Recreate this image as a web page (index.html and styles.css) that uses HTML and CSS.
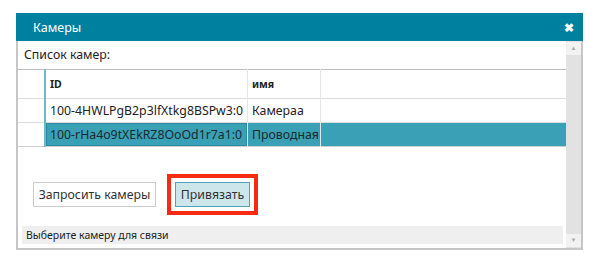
FILE: index.html
```html
<!DOCTYPE html>
<html lang="ru">
<head>
    <meta charset="UTF-8">
    <title>Камеры</title>
    <link rel="stylesheet" href="styles.css">
</head>
<body>

    <div class="dialog">
        <div class="dialog-title">
            <span>Камеры</span>
            <span class="close">&#10006;</span>
        </div>
        <div class="dialog-body">
            <div class="content">
                <div class="caption">Список камер:</div>
                <table class="grid">
                    <tr class="head">
                        <td class="rh"></td>
                        <td class="c-id">ID</td>
                        <td class="c-name">имя</td>
                        <td></td>
                    </tr>
                    <tr>
                        <td class="rh"></td>
                        <td class="c-id">100-4HWLPgB2p3lfXtkg8BSPw3:0</td>
                        <td class="c-name">Камераа</td>
                        <td></td>
                    </tr>
                    <tr class="selected">
                        <td class="rh"></td>
                        <td class="c-id focus">100-rHa4o9tXEkRZ8OoOd1r7a1:0</td>
                        <td class="c-name">Проводная</td>
                        <td></td>
                    </tr>
                </table>
                <div class="actions">
                    <button class="btn btn-query">Запросить камеры</button>
                    <button class="btn btn-primary">Привязать</button>
                </div>
                <div class="status">Выберите камеру для связи</div>
            </div>
            <div class="scrollbar">
                <div class="arrow">&#9650;</div>
                <div class="track"></div>
                <div class="arrow">&#9660;</div>
            </div>
        </div>
    </div>

</body>
</html>
```
FILE: styles.css
```css
body {
    margin: 0;
    background-color: #ffffff;
    font-family: "Noto Sans", "Open Sans", sans-serif;
    color: #222;
}
.dialog {
    margin: 13px 0 0 16px;
    width: 567px;
}
.dialog-title {
    height: 28px;
    background-color: #00809f;
    color: #fff;
    font-size: 12.5px;
    display: flex;
    align-items: center;
    justify-content: space-between;
    padding: 0 9px 0 17px;
}
.close {
    font-size: 12px;
    font-weight: bold;
}
.dialog-body {
    display: flex;
    height: 207px;
    border: 2px solid #c6c6c6;
    border-top: none;
}
.content {
    flex: 1;
    display: flex;
    flex-direction: column;
}
.caption {
    height: 28px;
    line-height: 28px;
    font-size: 12.3px;
    padding-left: 6px;
}
.grid {
    border-collapse: collapse;
    table-layout: fixed;
    width: 100%;
    font-size: 12.3px;
    border-top: 1px solid #bdbdbd;
    border-bottom: 1px solid #cfcfcf;
}
.grid td {
    border-top: 1px solid #dedede;
    height: 23px;
    padding: 0 0 0 4px;
    white-space: nowrap;
    overflow: hidden;
}
.grid .head td {
    height: 28px;
    font-size: 10.5px;
    font-weight: bold;
    border-top: none;
}
.grid td.rh {
    width: 22px;
    border-right: 2px solid #6db8c9;
    background-color: #fff;
}
.grid td.c-id {
    width: 197px;
    border-right: 1px solid #e6e6e6;
}
.grid td.c-name {
    width: 68px;
    border-right: 1px solid #e6e6e6;
}
.grid .selected td {
    background-color: #39a0b5;
    color: #1b2b30;
}
.grid .selected td.rh {
    background-color: #fff;
}
.grid .selected td.focus {
    box-shadow: inset 0 0 0 1px #2a8ca2;
}
.actions {
    display: flex;
    gap: 19px;
    margin: 35px 0 0 15px;
}
.btn {
    height: 25px;
    padding: 0;
    font-family: inherit;
    font-size: 12.3px;
    color: #333;
    background-color: #fff;
    border: 1px solid #cccccc;
}
.btn-query {
    width: 123px;
}
.btn-primary {
    width: 75px;
    background-color: #cde6ec;
    border-color: #4da4b9;
    outline: 4px solid #f52b12;
    outline-offset: 4px;
}
.status {
    margin: 19px 3px 0 4px;
    height: 18px;
    line-height: 18px;
    padding-left: 4px;
    font-size: 10.5px;
    background-color: #efefef;
}
.scrollbar {
    width: 15px;
    display: flex;
    flex-direction: column;
    background-color: #e2e2e2;
}
.arrow {
    height: 13px;
    margin: 1px 0;
    background-color: #f2f2f2;
    color: #a8a8a8;
    font-size: 6px;
    text-align: center;
    line-height: 13px;
}
.track {
    flex: 1;
}
```
